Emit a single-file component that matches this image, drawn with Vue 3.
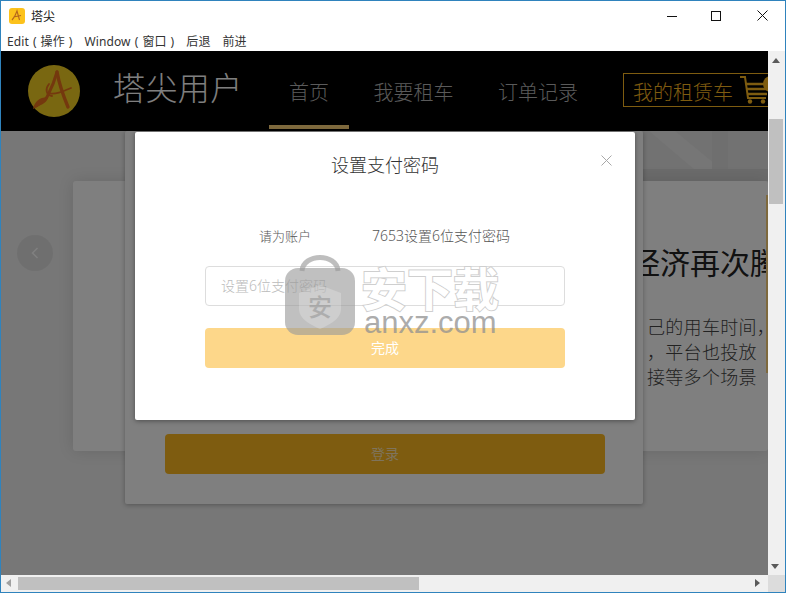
<script setup>
const menus = ['Edit ( 操作 )', 'Window ( 窗口 )', '后退', '前进']
const navs = [
  { label: '首页', active: true },
  { label: '我要租车', active: false },
  { label: '订单记录', active: false }
]
const lines = ['己的用车时间，', '，平台也投放', '接等多个场景']
</script>

<template>
  <div class="window">
    <div class="titlebar">
      <svg class="appicon" viewBox="0 0 16 16" width="16" height="16">
        <rect x="0" y="0" width="16" height="16" rx="3" fill="#fcc21c" />
        <path d="M3 12 Q6 9 8 3 L10.5 12 M4.5 9 L12 7.5" fill="none" stroke="#b5651d" stroke-width="1.1" />
      </svg>
      <span class="apptitle">塔尖</span>
      <div class="controls">
        <svg viewBox="0 0 10 10" width="10" height="10" class="c-min"><path d="M0 5.5H10" stroke="#111" stroke-width="1" /></svg>
        <svg viewBox="0 0 10 10" width="10" height="10" class="c-max"><rect x=".5" y=".5" width="9" height="9" fill="none" stroke="#111" /></svg>
        <svg viewBox="0 0 11 11" width="11" height="11" class="c-close"><path d="M.5 .5L10.5 10.5M10.5 .5L.5 10.5" stroke="#111" stroke-width="1" /></svg>
      </div>
    </div>
    <div class="menubar">
      <span v-for="m in menus" :key="m">{{ m }}</span>
    </div>

    <div class="main">
      <div class="viewport">
        <header class="header">
          <svg class="logo" viewBox="0 0 52 52" width="52" height="52">
            <circle cx="26" cy="26" r="26" fill="#f2cf22" />
            <g fill="none" stroke="#e8701c" stroke-linecap="round">
              <path d="M29 7 C26 18 23 24 20 30 C18 36 12 38 8 41" stroke-width="3" />
              <path d="M29 7 C31 18 35 30 40 42" stroke-width="3.4" />
              <path d="M20 28 C28 30 36 26 43 23" stroke-width="1.8" />
              <path d="M21 19 C17 24 18 30 24 31" stroke-width="1.8" />
            </g>
            <path d="M5 44 C7 35 14 31 20 33 C18 39 12 40 5 44Z" fill="#e8701c" />
          </svg>
          <div class="brand">塔尖用户</div>
          <nav class="nav">
            <a v-for="n in navs" :key="n.label" class="navitem" :class="{ active: n.active }">{{ n.label }}</a>
          </nav>
          <div class="rent">
            <span>我的租赁车</span>
            <svg class="cart" viewBox="0 0 40 30" width="40" height="30">
              <g fill="none" stroke="#fcb820" stroke-width="2">
                <path d="M1 2H6L9 23H27" />
                <path d="M7 9H28M8 14H28M8 19H28" stroke-width="2.4" />
              </g>
              <circle cx="11" cy="26.5" r="2.2" fill="#fcb820" />
              <circle cx="24" cy="26.5" r="2.2" fill="#fcb820" />
              <circle cx="32" cy="9" r="8" fill="#fcb820" />
            </svg>
          </div>
        </header>

        <section class="stage">
          <svg class="backdrop" viewBox="0 0 125 50" width="125" height="50" preserveAspectRatio="none">
            <rect width="125" height="50" fill="#e4e4e4" />
            <path d="M6 0H32L66 28L84 42V50H66L46 34Z" fill="#ececec" />
            <rect x="69" y="0" width="16" height="50" fill="#dedede" />
            <rect x="0" y="38" width="125" height="12" fill="#d6d6d6" />
          </svg>
          <div class="hero">
            <h2 class="headline">经济再次腾</h2>
            <p class="copy">
              <span v-for="l in lines" :key="l">{{ l }}</span>
            </p>
          </div>
          <div class="edge"></div>
          <button class="prev" aria-label="previous">
            <svg viewBox="0 0 8 12" width="8" height="12"><path d="M6.5 1L1.5 6L6.5 11" fill="none" stroke="#fff" stroke-width="1.5" /></svg>
          </button>
          <div class="logincard">
            <div class="loginbtn">登录</div>
          </div>
        </section>

        <div class="mask"></div>

        <div class="modal">
          <h3 class="modaltitle">设置支付密码</h3>
          <svg class="modalclose" viewBox="0 0 11 11" width="11" height="11"><path d="M.5 .5L10.5 10.5M10.5 .5L.5 10.5" stroke="#a8a8a8" stroke-width="1" /></svg>
          <div class="account">
            <span class="acc-a">请为账户</span>
            <span class="acc-b">7653设置6位支付密码</span>
          </div>
          <div class="field">设置6位支付密码</div>
          <div class="done">完成</div>
        </div>
      </div>

      <div class="vscroll">
        <svg class="arrow-u" viewBox="0 0 8 5" width="8" height="5"><path d="M4 0L8 5H0Z" fill="#5a5a5a" /></svg>
        <div class="vthumb"></div>
        <svg class="arrow-d" viewBox="0 0 8 5" width="8" height="5"><path d="M0 0H8L4 5Z" fill="#5a5a5a" /></svg>
      </div>
    </div>

    <div class="hscroll">
      <svg class="arrow-l" viewBox="0 0 5 8" width="5" height="8"><path d="M5 0V8L0 4Z" fill="#a0a0a0" /></svg>
      <div class="hthumb"></div>
      <svg class="arrow-r" viewBox="0 0 5 8" width="5" height="8"><path d="M0 0V8L5 4Z" fill="#5a5a5a" /></svg>
      <div class="corner"></div>
    </div>

    <div class="watermark">
      <svg class="bag" viewBox="0 0 70 80" width="70" height="80">
        <path d="M17 16C18 -2 52 -2 53 16" fill="none" stroke="#a8a8a8" stroke-opacity=".75" stroke-width="5" />
        <rect x="0" y="13" width="70" height="67" rx="13" fill="#9a9a9a" fill-opacity=".62" />
        <path d="M35 30L56 38V54C56 64 44 70 35 74C26 70 14 64 14 54V38Z" fill="#ffffff" fill-opacity=".22" />
      </svg>
      <span class="bagchar">安</span>
      <div class="wm-text">
        <span class="wm-cn">安下载</span>
        <span class="wm-en">anxz.com</span>
      </div>
    </div>
  </div>
</template>

<style>
html, body { margin: 0; background: #fff; overflow: hidden; }
</style>

<style scoped>
.window {
  position: relative;
  width: 786px;
  height: 593px;
  box-sizing: border-box;
  border: 1px solid #2f83bd;
  display: flex;
  flex-direction: column;
  overflow: hidden;
  background: #fff;
  font-family: "Noto Sans", "Noto Sans CJK SC", sans-serif;
  color: #222;
}
.titlebar {
  height: 30px;
  flex: none;
  display: flex;
  align-items: center;
  padding-left: 8px;
}
.appicon { margin-right: 6px; }
.apptitle { font-size: 12px; }
.controls { margin-left: auto; display: flex; align-items: center; height: 100%; }
.controls svg { display: block; margin-bottom: 1px; }
.c-min { margin-right: 34px; }
.c-max { margin-right: 36px; }
.c-close { margin-right: 17px; }
.menubar {
  height: 20px;
  flex: none;
  display: flex;
  align-items: center;
  gap: 12px;
  padding-left: 6px;
  font-size: 12px;
  color: #333;
  word-spacing: .8px;
  letter-spacing: .1px;
}
.main { flex: 1; min-height: 0; display: flex; }
.viewport { position: relative; width: 767px; flex: none; overflow: hidden; }
.header {
  height: 80px;
  background: #000;
  display: flex;
  align-items: center;
  padding-left: 27px;
  white-space: nowrap;
}
.logo { flex: none; margin-right: 33px; }
.brand { font-size: 32px; letter-spacing: .4px; font-weight: 300; color: #fff; width: 156px; flex: none; line-height: 1; margin-top: -6px; }
.nav { display: flex; gap: 4.5px; height: 100%; flex: none; }
.navitem {
  position: relative;
  padding: 0 20px;
  font-size: 20px;
  font-weight: 300;
  line-height: 84px;
  color: #b4b4b4;
}
.navitem.active::after {
  content: "";
  position: absolute;
  left: 0;
  right: 0;
  bottom: 2px;
  height: 4px;
  background: #fcd27a;
}
.rent {
  flex: none;
  margin-left: 25px;
  height: 34px;
  box-sizing: border-box;
  width: 200px;
  border: 1px solid #fcb820;
  display: flex;
  align-items: center;
  padding-left: 9px;
  font-size: 20px;
  font-weight: 300;
  color: #fcb820;
  margin-top: -2px;
}
.rent span { padding-top: 2px; }
.cart { margin-left: 6px; flex: none; }
.stage {
  position: relative;
  height: 444px;
  background: #eee;
  padding-top: 50px;
  box-sizing: border-box;
  overflow: hidden;
}
.backdrop { position: absolute; left: 642px; top: 0; }
.hero {
  position: relative;
  margin-left: 72px;
  height: 270px;
  background: #fff;
  border-radius: 3px;
  box-shadow: 0 0 16px rgba(0, 0, 0, .12);
  padding: 60px 0 0 557px;
  box-sizing: border-box;
  white-space: nowrap;
}
.headline { margin: 0; font-size: 30px; line-height: 44px; font-weight: 400; color: #222; }
.copy {
  margin: 30px 0 0 17px;
  display: flex;
  flex-direction: column;
  font-size: 18px;
  line-height: 25px;
  letter-spacing: .3px;
  font-weight: 300;
  color: #444;
}
.edge {
  position: absolute;
  right: 0;
  top: 64px;
  width: 2px;
  height: 178px;
  background: #fcd27a;
}
.prev {
  position: absolute;
  left: 16px;
  top: 104px;
  width: 36px;
  height: 36px;
  padding: 0;
  border: 0;
  border-radius: 50%;
  background: rgba(120, 125, 125, .13);
  display: flex;
  align-items: center;
  justify-content: center;
}
.logincard {
  position: absolute;
  left: 124px;
  top: 0;
  width: 518px;
  height: 373px;
  box-sizing: border-box;
  background: #fff;
  border-radius: 2px;
  box-shadow: 0 1px 5px rgba(0, 0, 0, .3);
  padding: 0 38px 30px 40px;
  display: flex;
  flex-direction: column;
  justify-content: flex-end;
}
.loginbtn {
  height: 40px;
  border-radius: 4px;
  background: #fcb820;
  color: #ffffffb0;
  font-size: 14px;
  line-height: 40px;
  text-align: center;
}
.mask { position: absolute; inset: 0; background: rgba(0, 0, 0, .5); }
.modal {
  position: absolute;
  left: 134px;
  top: 81px;
  width: 500px;
  height: 288px;
  box-sizing: border-box;
  background: #fff;
  border-radius: 2px;
  box-shadow: 0 1px 5px rgba(0, 0, 0, .4);
  padding: 20px 70px 0;
}
.modaltitle {
  margin: 0;
  font-size: 18px;
  line-height: 26px;
  font-weight: 300;
  color: #333;
  text-align: center;
}
.modalclose { position: absolute; right: 23px; top: 23px; }
.account {
  margin-top: 44px;
  padding-left: 54px;
  display: flex;
  align-items: center;
  height: 26px;
  color: #555;
  font-weight: 300;
}
.acc-a { font-size: 13px; margin-right: 61px; }
.acc-b { font-size: 14px; }
.field {
  margin-top: 18px;
  height: 40px;
  box-sizing: border-box;
  border: 1px solid #ddd;
  border-radius: 4px;
  padding-left: 15px;
  font-size: 14px;
  line-height: 38px;
  color: #bbb;
  font-weight: 300;
}
.done {
  margin-top: 22px;
  height: 40px;
  border-radius: 4px;
  background: #fdd78a;
  color: #fff;
  font-size: 14px;
  line-height: 40px;
  text-align: center;
}
.vscroll { position: relative; flex: 1; background: #f0f0f0; }
.vthumb {
  position: absolute;
  left: 1px;
  right: 2px;
  top: 68px;
  height: 85px;
  background: #c0c0c0;
}
.arrow-u { position: absolute; left: 4px; top: 7px; }
.arrow-d { position: absolute; left: 3px; bottom: 6px; }
.hscroll {
  position: relative;
  height: 17px;
  flex: none;
  background: #f0f0f0;
}
.hthumb {
  position: absolute;
  left: 17px;
  top: 2px;
  width: 401px;
  height: 13px;
  background: #c0c0c0;
}
.arrow-l { position: absolute; left: 5px; top: 4px; }
.arrow-r { position: absolute; left: 754px; top: 4px; }
.corner { position: absolute; right: 0; top: 0; width: 17px; height: 17px; background: #dcdcdc; }
.watermark {
  position: absolute;
  left: 284px;
  top: 254px;
  width: 220px;
  height: 82px;
  pointer-events: none;
}
.bag { position: absolute; left: 0; top: 0; }
.bagchar {
  position: absolute;
  left: 23px;
  top: 37px;
  font-size: 24px;
  line-height: 30px;
  color: rgba(140, 140, 140, .5);
  font-weight: 500;
}
.wm-text { position: absolute; left: 76px; top: 11px; display: flex; flex-direction: column; white-space: nowrap; }
.wm-cn {
  font-size: 46px;
  line-height: 44px;
  font-weight: 700;
  color: #fff;
  -webkit-text-stroke: 2px #cfcfcf;
  paint-order: stroke fill;
}
.wm-en {
  font-family: "Liberation Sans", sans-serif;
  font-size: 31px;
  line-height: 26px;
  color: rgba(145, 145, 145, .75);
  margin-left: 3px;
}
</style>
